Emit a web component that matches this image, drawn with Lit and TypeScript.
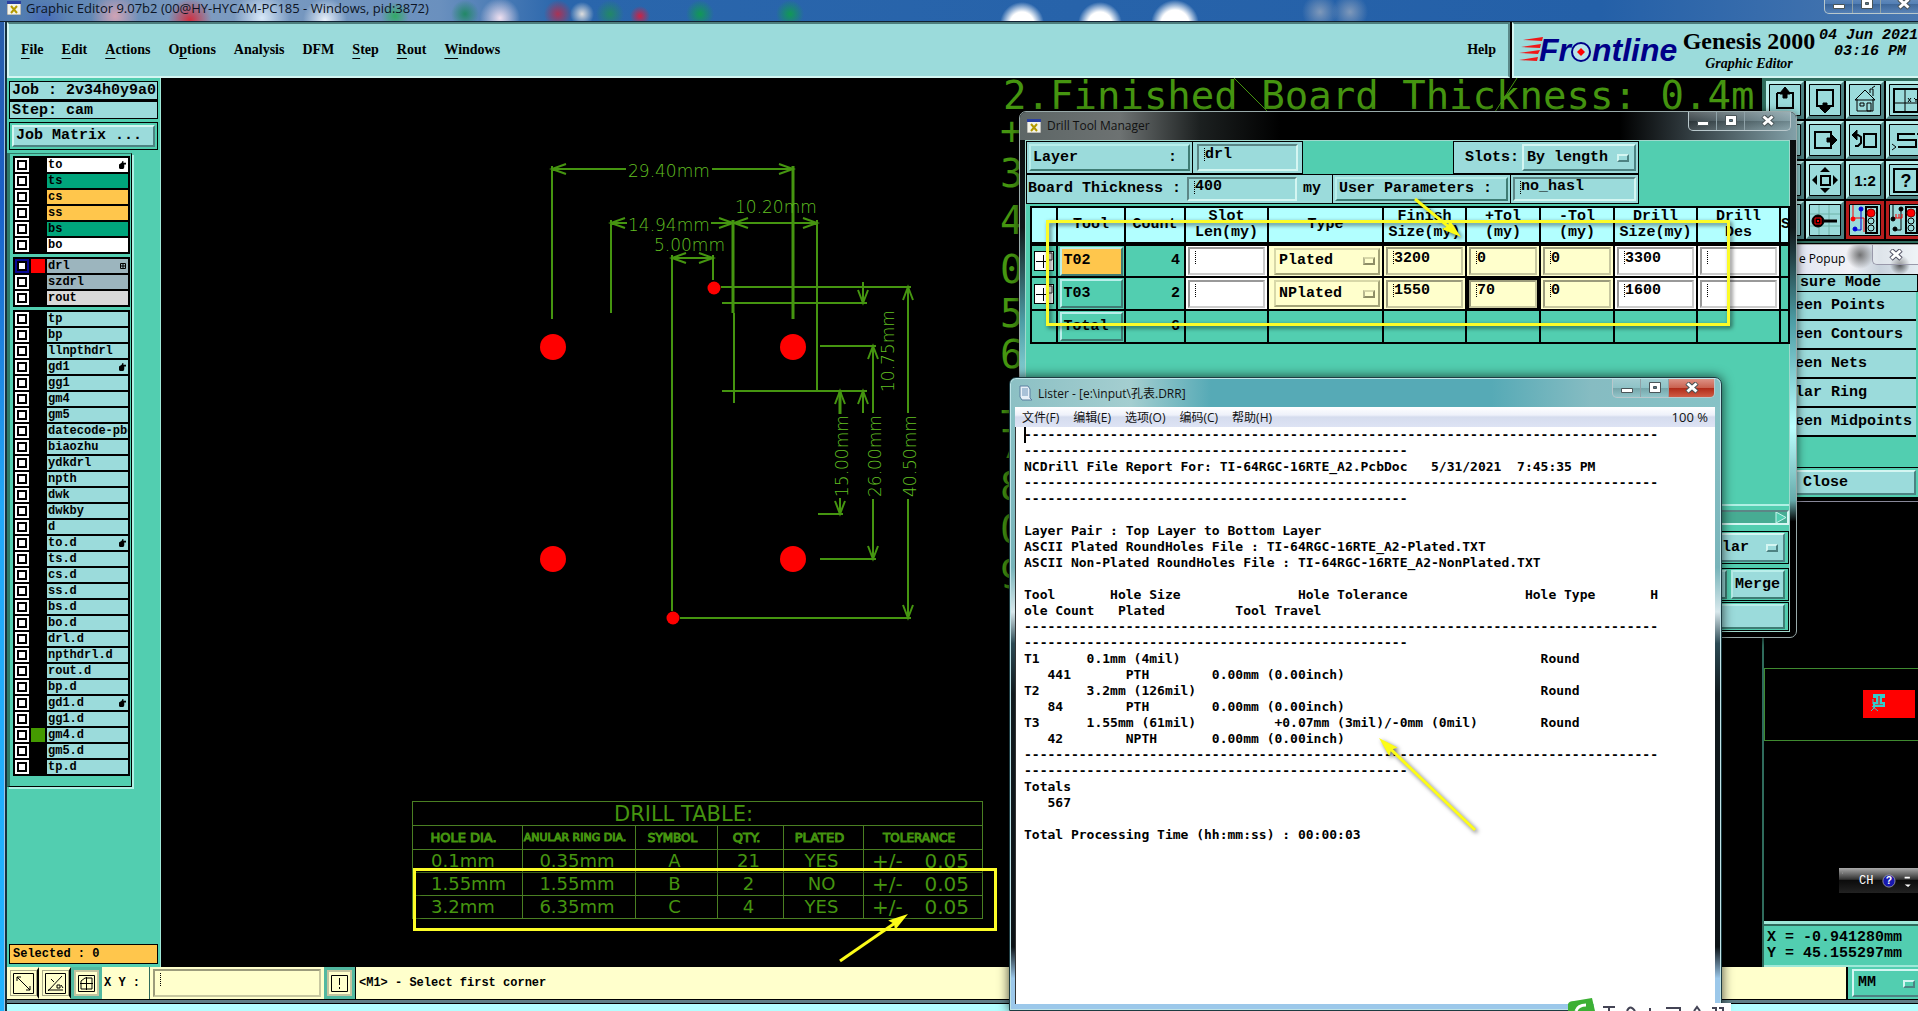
import { LitElement, html, css, svg, nothing } from "lit";
import { customElement, property } from "lit/decorators.js";
import { classMap } from "lit/directives/class-map.js";

type Layer = { name: string; tone?: string; swatch?: string; mark?: "hand" | "grid" };

const boardLayers: Layer[] = [
  { name: "to", tone: "white", mark: "hand" },
  { name: "ts", tone: "mask" },
  { name: "cs", tone: "signal" },
  { name: "ss", tone: "signal" },
  { name: "bs", tone: "mask" },
  { name: "bo", tone: "white" },
];
const drillLayers: Layer[] = [
  { name: "drl", tone: "drill", swatch: "red", mark: "grid" },
  { name: "szdrl", tone: "drill" },
  { name: "rout", tone: "rout" },
];
const hands = new Set(["gd1", "to.d", "gd1.d"]);
const docLayers: Layer[] =
  "tp bp llnpthdrl gd1 gg1 gm4 gm5 datecode-pbc biaozhu ydkdrl npth dwk dwkby d to.d ts.d cs.d ss.d bs.d bo.d drl.d npthdrl.d rout.d bp.d gd1.d gg1.d gm4.d gm5.d tp.d"
    .split(" ")
    .map((name) => ({
      name,
      mark: hands.has(name) ? "hand" : undefined,
      swatch: name === "gm4.d" ? "green" : undefined,
    }));

const bevel = css`
  * {
    box-sizing: border-box;
  }
  button,
  input,
  select {
    font: inherit;
    color: inherit;
    margin: 0;
    border-radius: 0;
    appearance: none;
    outline: none;
  }
  svg {
    display: block;
  }
  .raised {
    border: 2px solid;
    border-color: #d4f6f2 #4d8282 #4d8282 #d4f6f2;
    background: #9bdbdb;
  }
  .sunken {
    border: 2px solid;
    border-color: #5c8686 #d4f6f2 #d4f6f2 #5c8686;
    background: #9bdbdb;
  }
  .mono {
    font-family: "Liberation Mono", monospace;
    font-weight: 700;
    font-size: 15px;
    line-height: 16px;
  }
`;

@customElement("layer-list")
export class LayerList extends LitElement {
  @property({ attribute: false }) layers: Layer[] = [];

  static styles = [
    bevel,
    css`
      :host {
        display: block;
        background: #000;
        padding: 1px;
        font: 700 12px/14px "Liberation Mono", monospace;
        color: #000;
      }
      .row {
        display: grid;
        grid-template-columns: 14px 14px 1fr;
        column-gap: 2px;
        height: 16px;
        padding: 1px;
      }
      .tick {
        width: 14px;
        height: 14px;
        background: #fff;
        box-shadow: inset 0 0 0 2px #fff, inset 0 0 0 4px #000;
      }
      .tick:checked {
        box-shadow: inset 0 0 0 2px #0a0a96, inset 0 0 0 4px #000;
      }
      .swatch.red {
        background: #f00;
      }
      .swatch.green {
        background: #449a00;
      }
      .name {
        display: flex;
        align-items: center;
        justify-content: space-between;
        overflow: hidden;
        white-space: nowrap;
        padding: 0 2px 0 1px;
        background: #9bdbdb;
      }
      .name svg {
        flex: none;
      }
      .white {
        background: #fff;
      }
      .mask {
        background: #00a57c;
      }
      .signal {
        background: #ffc64c;
      }
      .drill {
        background: #9cb5be;
      }
      .rout {
        background: #d9d9d9;
      }
    `,
  ];

  private mark(kind?: string) {
    if (kind === "hand")
      return html`<svg width="7" height="8" viewBox="0 0 8 9"><path d="M0 4l3-2 1-2h1v2h3v2H6v3L5 9H1L0 8z" /></svg>`;
    if (kind === "grid")
      return html`<svg width="6" height="6" viewBox="0 0 6 6" fill="none" stroke="#000"><path d="M.5.5h5v5h-5zM3 0v6M0 3h6" /></svg>`;
    return nothing;
  }

  render() {
    return this.layers.map(
      (l) => html`<div class="row">
        <input class="tick" type="checkbox" id=${"l-" + l.name} ?checked=${l.swatch === "red"} />
        <span class="swatch ${l.swatch ?? ""}"></span>
        <label class="name ${l.tone ?? ""}" for=${"l-" + l.name}><span>${l.name}</span>${this.mark(l.mark)}</label>
      </div>`
    );
  }
}

@customElement("tool-palette")
export class ToolPalette extends LitElement {
  static styles = [
    bevel,
    css`
      :host {
        display: block;
        background: #000;
        border: 2px solid #2f6b5c;
        border-top-width: 3px;
        border-right: 0;
        overflow: hidden;
      }
      .grid {
        display: grid;
        grid-template-columns: repeat(4, 38px);
        grid-auto-rows: 38px;
        gap: 2px;
      }
      .tool {
        display: grid;
        place-items: center;
        padding: 0;
        border-width: 3px;
        border-color: #b9eeea #4d8282 #4d8282 #b9eeea;
      }
      .hot {
        border-color: #b81c1c;
      }
    `,
  ];

  private icons = [
    ["Pan up", svg`<path d="M8 9h4M20 9h4v15H8V9" fill="none" stroke-width="2"/><path d="M11 9l5-6 5 6v1h-3v4h-4v-4h-3z"/>`],
    ["Pan down", svg`<path d="M8 6h16v16H8z" fill="none" stroke-width="2"/><path d="M14 19h4v4h3v1l-5 5-5-5v-1h3z"/>`],
    ["Home", svg`<path d="M6 16l10-10 10 10M8 15v12h16V15M21 9V5h3v7M23 4l3-2" fill="none" stroke-width="1"/><path d="M11 19h4v3h-4zM18 19h4v8h-4zM6 16h20" fill="none"/>`],
    ["Zoom window", svg`<path d="M5 5h24v23H5z" fill="none" stroke-width="2"/><path d="M16 5v23M5 19h24" fill="none"/><path d="M19 14l3 4M22 14l-3 4M25 14l2 2 2-2M27 16v2" fill="none"/>`],
    ["Pan left", svg`<path d="M9 8h16v16H9z" fill="none" stroke-width="2"/>`],
    ["Pan right", svg`<path d="M6 8h16v16H6z" fill="none" stroke-width="2"/><path d="M18 14h4v-3h1l5 5-5 5h-1v-3h-4z"/>`],
    ["Previous view", svg`<path d="M15 10h12v13H15z" fill="none" stroke-width="2"/><path d="M5 11h4l3 2v6l-3 3H6" fill="none" stroke-width="2"/><path d="M3 11l5-5v10z"/>`],
    ["Snake", svg`<path d="M26 10H9v6h18v7H9" fill="none" stroke-width="2"/><path d="M28 10l3-3M28 10l3 3M7 23l-4-3M7 23l-4 3" fill="none"/>`],
    ["Zoom in", svg`<path d="M9 8h16v16H9z" fill="none" stroke-width="2"/>`],
    ["Pan all", svg`<path d="M12 12h9v9h-9z" fill="none" stroke-width="2"/><path d="M11 8l5-5 5 5zM11 24l5 5 5-5zM8 11l-5 5 5 5zM24 11l5 5-5 5z" stroke="none"/>`],
    ["Scale one to two", svg`<text x="16" y="22" text-anchor="middle" font-family="Liberation Sans, sans-serif" font-weight="700" font-size="15" stroke="none">1:2</text>`],
    ["Help", svg`<path d="M5 5h23v23H5z" fill="none" stroke-width="2"/><text x="17" y="23" text-anchor="middle" font-family="Liberation Sans, sans-serif" font-weight="700" font-size="18" stroke="none">?</text>`],
    ["Grid", svg`<path d="M9 8h16v16H9z" fill="none" stroke-width="2"/>`],
    ["Snap", svg`<path d="M10 1v30M20 1v30M1 10h30M1 22h30" fill="none" stroke="#6fb3a8"/><circle cx="9" cy="17" r="6"/><path d="M6 14h6v6H6z" fill="none" stroke="#f00"/><path d="M8 16h2v2H8z" fill="#f00" stroke="none"/><path d="M15 17h13" stroke-width="3"/>`],
    ["Net highlight", svg`<path d="M4 1v13h11v14" fill="none" stroke="#f00"/><path d="M12 5v21H6" fill="none" stroke="#0000d8"/><circle cx="12" cy="5" r="2" fill="#0000d8" stroke="#0000d8"/><circle cx="6" cy="25" r="2" fill="#0000d8" stroke="#0000d8"/><circle cx="4" cy="15" r="2" fill="#f00" stroke="#f00"/><path d="M17 3h11v26H17z" fill="none" stroke-width="2"/><circle cx="22" cy="9" r="4" fill="#f00" stroke="#800"/><circle cx="22" cy="17" r="3" fill="none"/><circle cx="22" cy="24" r="3" fill="none"/>`],
    ["Net break", svg`<path d="M4 1v13M12 5v21H6" fill="none"/><path d="M4 14h9M7 10v4M10 10v4M13 10v4" fill="none" stroke="#f00"/><circle cx="12" cy="5" r="2"/><circle cx="6" cy="25" r="2"/><circle cx="4" cy="15" r="2"/><path d="M17 3h11v26H17z" fill="none" stroke-width="2"/><circle cx="22" cy="9" r="4" fill="#f00" stroke="#800"/><circle cx="22" cy="17" r="3" fill="none"/><circle cx="22" cy="24" r="3" fill="none"/>`],
  ] as const;

  render() {
    return html`<div class="grid">
      ${this.icons.map(
        ([label, art], i) => html`<button class=${classMap({ tool: true, raised: true, hot: i > 13 })} aria-label=${label}>
          <svg width="32" height="32" viewBox="0 0 32 32" stroke="#000" fill="#000">
            <path d="M.5.5h31v31H.5z" fill="none" />
            ${art}
          </svg>
        </button>`
      )}
    </div>`;
  }
}

const arrow = (x: number, y: number, d: "l" | "r" | "u" | "d") => {
  const p = {
    l: `M${x + 14} ${y - 5}L${x} ${y}l14 5`,
    r: `M${x - 14} ${y - 5}L${x} ${y}l-14 5`,
    u: `M${x - 5} ${y + 13}L${x} ${y}l5 13`,
    d: `M${x - 5} ${y - 13}L${x} ${y}l5-13`,
  };
  return p[d];
};

@customElement("cad-canvas")
export class CadCanvas extends LitElement {
  static styles = [
    bevel,
    css`
      :host {
        display: block;
        position: relative;
        overflow: hidden;
        background: #000;
        color: #459510;
        font-family: "DejaVu Sans", sans-serif;
      }
      .plot {
        position: absolute;
        inset: 0;
        width: 100%;
        height: 100%;
      }
      .dim {
        font-size: 17px;
        font-weight: 200;
        fill: #62c022;
      }
      .note {
        font: 39px "DejaVu Sans Mono", monospace;
        fill: currentColor;
        white-space: pre;
      }
      .drills {
        position: absolute;
        left: 251px;
        top: 723px;
        width: 571px;
        table-layout: fixed;
        border-collapse: collapse;
        font-size: 18px;
        line-height: 20px;
        font-weight: 400;
      }
      .drills th,
      .drills td {
        border: 1px solid #4a7f22;
        height: 23px;
        padding: 0 4px 0 0;
        text-align: center;
        font-weight: 400;
        white-space: nowrap;
      }
      .drills caption {
        border: 1px solid #4a7f22;
        border-bottom: 0;
        height: 24px;
        padding-right: 28px;
        line-height: 24px;
        font-size: 21px;
      }
      .drills th {
        height: 24px;
        padding-right: 8px;
        font-size: 12px;
        -webkit-text-stroke: 1px #459510;
      }
      .drills th.big {
        font-size: 13px;
      }
      .drills th.long {
        font-size: 11px;
      }
      .drills td.dia {
        text-align: left;
        padding-left: 18px;
      }
      .pm {
        display: flex;
        justify-content: space-between;
        padding: 0 9px 0 8px;
        font-size: 20px;
      }
    `,
  ];

  private holes = [
    ["0.1mm", "0.35mm", "A", "21", "YES"],
    ["1.55mm", "1.55mm", "B", "2", "NO"],
    ["3.2mm", "6.35mm", "C", "4", "YES"],
  ];

  private notes: [string, number][] = [
    ["+", 144], ["3", 187], ["4", 234], ["0", 283], ["5", 327], ["6", 368], ["+", 424], ["7", 458], ["8", 500], ["0", 543], ["9", 588],
  ];

  render() {
    const lines = [
      "M552 166V319M552 169H626M712 169H793",
      "M611 220V313M611 223H627M711 223H817M817 220V391M734 313V403",
      "M672 255V611M672 258H713M713 255V280",
      "M721 287H911M722 303H867M863 282V303M722 391H867M863 391V413",
      "M840 498V514M818 514H843",
      "M820 346H876M873 346V413M873 499V559M820 559H876",
      "M908 287V413M908 499V618M680 618H911",
      arrow(552, 169, "l"), arrow(793, 169, "r"), arrow(611, 223, "l"), arrow(733, 223, "r"),
      arrow(734, 223, "l"), arrow(817, 223, "r"), arrow(672, 258, "l"), arrow(713, 258, "r"),
      arrow(863, 303, "d"), arrow(863, 391, "u"), arrow(840, 391, "u"), arrow(840, 514, "d"),
      arrow(873, 346, "u"), arrow(873, 559, "d"), arrow(908, 287, "u"), arrow(908, 618, "d"),
    ].join("");
    const up = (x: number, y: number, t: string) => svg`<text class="dim" transform="translate(${x} ${y}) rotate(-90)">${t}</text>`;
    return html`
      <svg class="plot">
        <g transform="translate(-161 -78)">
          <path d=${lines} fill="none" stroke="currentColor" stroke-width="2" />
          <path d="M793 166V319M733 220V313M840 391V414" fill="none" stroke="currentColor" stroke-width="3" />
          <text class="dim" x="628" y="177">29.40mm</text>
          <text class="dim" x="735" y="213">10.20mm</text>
          <text class="dim" x="628" y="231">14.94mm</text>
          <text class="dim" x="654" y="251">5.00mm</text>
          ${up(848, 497, "15.00mm")} ${up(881, 497, "26.00mm")} ${up(916, 497, "40.50mm")} ${up(894, 392, "10.75mm")}
          <g fill="#f00">
            <circle cx="553" cy="347" r="13" /><circle cx="793" cy="347" r="13" />
            <circle cx="553" cy="559" r="13" /><circle cx="793" cy="559" r="13" />
            <circle cx="714" cy="288" r="6.5" /><circle cx="673" cy="618" r="6.5" />
          </g>
          <text class="note" x="1003" y="109">2.Finished Board Thickness: 0.4m</text>
          ${this.notes.map(([t, y]) => svg`<text class="note" x="1000" y=${y}>${t}</text>`)}
          <path d="M1234 78L1294 138M1517 78L1478 138" stroke="currentColor" fill="none" />
        </g>
      </svg>
      <table class="drills">
        <caption>DRILL TABLE:</caption>
        <colgroup>
          <col style="width:110px" /><col style="width:113px" /><col style="width:82px" /><col style="width:66px" /><col style="width:80px" /><col />
        </colgroup>
        <tr>
          <th class="big">HOLE DIA.</th><th class="long">ANULAR RING DIA.</th><th>SYMBOL</th><th class="big">QTY.</th><th class="big">PLATED</th><th>TOLERANCE</th>
        </tr>
        ${this.holes.map(
          (r) => html`<tr>
            <td class="dia">${r[0]}</td>
            ${r.slice(1).map((c) => html`<td>${c}</td>`)}
            <td><div class="pm"><span>+/-</span><span>0.05</span></div></td>
          </tr>`
        )}
      </table>`;
  }
}

@customElement("window-buttons")
export class WindowButtons extends LitElement {
  @property() tone = "dark";
  static styles = [
    bevel,
    css`
      :host {
        display: block;
      }
      .set {
        display: flex;
        height: 19px;
        border: 1px solid #b9c8cc;
        border-top: 0;
        border-radius: 0 0 5px 5px;
        overflow: hidden;
      }
      .btn {
        display: grid;
        place-items: center;
        width: 28px;
        padding: 0;
        border: 0;
        border-right: 1px solid #8fa2a8;
        background: linear-gradient(#ffffff38, #ffffff10 50%, #00000022 50%, #ffffff18);
      }
      .btn:last-child {
        width: 45px;
        border-right: 0;
      }
      .red .btn:last-child {
        background: linear-gradient(#dd9285, #c9604e 50%, #b02a17 50%, #cf5c45);
      }
    `,
  ];
  render() {
    return html`<div class="set ${this.tone}">
      <button class="btn" aria-label="Minimize"><svg width="14" height="12"><path d="M1.5 6.500h11v4h-11z" fill="#fff" stroke="#4a5558" /></svg></button>
      <button class="btn" aria-label="Maximize"><svg width="14" height="12"><path d="M1.500.500h11v10h-11z" fill="#fff" stroke="#4a5558" /><path d="M5.500 4.500h3v2h-3z" fill="#578" stroke="#4a5558" /></svg></button>
      <button class="btn" aria-label="Close"><svg width="14" height="12"><path d="M2 1l10 9M12 1L2 10" stroke="#4a5558" stroke-width="5" /><path d="M2.500 1.500l9 8M11.500 1.500l-9 8" stroke="#fff" stroke-width="3" /></svg></button>
    </div>`;
  }
}

const xIcon = html`<svg width="14" height="14" viewBox="0 0 14 14"><path d="M0 0h14v14H0z" fill="#f4f4e8" stroke="#888" /><path d="M0 0h14v3H0z" fill="#2a3fa0" /><path d="M4 5l6 7M10 5l-6 7" stroke="#b49a00" stroke-width="2" /></svg>`;

@customElement("drill-manager")
export class DrillManager extends LitElement {
  static styles = [
    bevel,
    css`
      :host {
        display: flex;
        flex-direction: column;
        border: 1px solid #9aa;
        border-radius: 7px;
        padding: 0 6px 5px 5px;
        background: linear-gradient(#0a0c0c 0, #10181a 22%, #4d9ea6 40%, #bff 60%, #6aa 74%, #000 78%);
        box-shadow: 0 2px 10px #000a;
        color: #000;
        overflow: hidden;
      }
      .title {
        display: flex;
        justify-content: space-between;
        height: 28px;
        margin: 0 -6px 0 -5px;
        padding: 0 5px 0 7px;
        background: linear-gradient(90deg, #5d6666, #6d7272 100px, #1c2020 180px, #000 260px, #000 600px, #2b3438 660px, #82a0a8);
        font: 12px/26px "Open Sans", sans-serif;
        color: #111;
      }
      .name {
        display: flex;
        align-items: center;
        gap: 6px;
      }
      .body {
        flex: 1;
        display: flex;
        flex-direction: column;
        background: #52ceb0;
        border: 1px solid #9fd8cc;
      }
      .line {
        display: flex;
        height: 33px;
        flex: none;
      }
      .line.low {
        height: 30px;
      }
      .cell {
        display: flex;
        align-items: center;
        gap: 6px;
        padding: 2px 4px;
        border: 1px solid #000;
        background: #9bdbdb;
      }
      .cell + .cell {
        border-left: 0;
      }
      .push {
        display: flex;
        justify-content: space-between;
        align-items: center;
        width: 100%;
        height: 100%;
        padding: 0 2px;
        text-align: left;
        border-color: #b9eeea #3f7c74 #3f7c74 #b9eeea;
      }
      .field {
        width: 100%;
        height: 100%;
        min-width: 0;
        padding: 0 0 6px 6px;
        background-image: repeating-linear-gradient(#000 0 1px, transparent 1px 2px);
        background-size: 1px 14px;
        background-position: 5px 2px;
        background-repeat: no-repeat;
      }
      .w1 {
        width: 167px;
        padding: 2px;
      }
      .w2 {
        width: 110px;
      }
      .w3 {
        width: 186px;
        padding: 2px;
        gap: 3px;
      }
      .w4 {
        width: 307px;
        padding: 2px 1px;
      }
      .w5 {
        width: 178px;
        padding: 2px;
      }
      .w6 {
        width: 128px;
        padding: 2px;
      }
      .thick {
        width: 110px;
        height: 24px;
        flex: none;
      }
      .grow {
        flex: 1;
      }
      .w0 {
        width: 150px;
      }
      .pick {
        position: relative;
        flex: 1;
        height: 100%;
        display: flex;
      }
      .pick select {
        width: 100%;
        padding: 0 3px;
      }
      .pick::after {
        content: "";
        box-sizing: border-box;
        position: absolute;
        right: 7px;
        top: calc(50% - 4px);
        width: 12px;
        height: 8px;
        border: 2px solid;
        border-color: #d4f6f2 #4d8282 #4d8282 #d4f6f2;
      }
      .cream {
        background-color: #ffc;
      }
      .cream select {
        border-color: #d8d8a8 #a4a478 #a4a478 #d8d8a8;
        background-color: #ffc;
      }
      .cream .pick::after {
        border-color: #d8d8a8 #8e8e66 #8e8e66 #b8b890;
      }
      .sheet {
        width: 760px;
        margin: 2px 0 0 4px;
        table-layout: fixed;
        border-collapse: collapse;
      }
      .sheet th,
      .sheet td {
        border: 2px solid #000;
        padding: 0;
        height: 33px;
        overflow: hidden;
      }
      .sheet th {
        height: 37px;
        border-bottom-width: 4px;
        background: #b2ffff;
        white-space: pre-line;
        line-height: 16px;
      }
      .sheet .push {
        height: 29px;
        width: 63px;
        margin: auto;
        background: #52ceb0;
      }
      .sheet .first {
        background: #ffc64c;
      }
      .sheet .field {
        display: block;
        width: calc(100% - 4px);
        height: 28px;
        margin: 1px 2px;
        border-color: #999 #ccc #ccc #999;
        background-color: #fff;
      }
      .sheet .cream .field {
        background-color: #ffc;
        border-color: #9c9c7c #c8c8a0 #c8c8a0 #9c9c7c;
      }
      .sheet .pick {
        height: 29px;
        padding: 1px 2px 1px 5px;
      }
      .sheet .white {
        background: #fff;
      }
      .num {
        text-align: right;
      }
      .sheet .num {
        padding-right: 4px;
      }
      .sheet .active {
        box-shadow: inset 0 0 0 2px #000;
      }
      .plus {
        display: block;
        width: 20px;
        height: 20px;
        margin: 0 auto;
        padding: 0;
        border: 1px solid #000;
        background: #fff;
      }
      .tail {
        display: flex;
        flex-direction: column;
        align-items: flex-end;
        gap: 1px;
      }
      .scroll {
        width: 100%;
        height: 15px;
        margin-bottom: 5px;
        display: flex;
        justify-content: flex-end;
        background: #47ac93;
        border-width: 2px;
      }
      .rule {
        width: 100%;
        border-bottom: 2px solid #b0f0e4;
        margin-bottom: 3px;
      }
      .box {
        display: flex;
        gap: 4px;
        width: 300px;
        height: 33px;
        padding: 1px 3px;
        background: #52ceb0;
        border: 1px solid #000;
        justify-content: flex-end;
      }
      .box.shape {
        margin-bottom: 3px;
      }
      .box .pick select {
        text-align: left;
        padding-left: 227px;
      }
      .box .push {
        width: 54px;
      }
      .box .push.wide {
        flex: 1;
      }
      .box.last {
        height: 29px;
      }
    `,
  ];

  private heads = ["", "Tool", "Count", "Slot\nLen(my)", "Type", "Finish\nSize(my)", "+Tol\n(my)", "-Tol\n(my)", "Drill\nSize(my)", "Drill\nDes", "S"];
  private widths = [26, 68, 60, 83, 115, 83, 74, 74, 83, 83];
  private tools = [
    { id: "T02", count: 4, type: "Plated", finish: "3200", plus: "0", minus: "0", drill: "3300" },
    { id: "T03", count: 2, type: "NPlated", finish: "1550", plus: "70", minus: "0", drill: "1600" },
  ];

  private entry(label: string, value: string, tone: string, active = false) {
    return html`<td class=${classMap({ [tone]: true, active })}><input class="field sunken" aria-label=${label} .value=${value} /></td>`;
  }

  render() {
    return html`
      <div class="title"><span class="name">${xIcon}Drill Tool Manager</span><window-buttons></window-buttons></div>
      <div class="body mono">
        <div class="line">
          <div class="cell w1"><button class="push raised"><span>Layer</span><span>:&nbsp;</span></button></div>
          <div class="cell w2"><input class="field sunken" aria-label="Layer" value="drl" /></div>
          <span class="grow"></span>
          <div class="cell w3">
            <label for="slots">&nbsp;Slots:</label>
            <span class="pick"><select id="slots" class="raised"><option>By length</option></select></span>
          </div>
          <span class="w0"></span>
        </div>
        <div class="line low">
          <div class="cell w4">
            <label for="thick">Board Thickness :</label>
            <input id="thick" class="field sunken thick" value="400" />my
          </div>
          <div class="cell w5"><button class="push raised">User Parameters :</button></div>
          <div class="cell w6"><input class="field sunken" aria-label="User parameters" value="no_hasl" /></div>
        </div>
        <table class="sheet">
          <colgroup>${this.widths.map((w) => html`<col style="width:${w}px" />`)}<col /></colgroup>
          <tr>${this.heads.map((h) => html`<th>${h}</th>`)}</tr>
          ${this.tools.map(
            (t, i) => html`<tr>
              <td><button class="plus" aria-label="Expand ${t.id}"><svg width="18" height="18"><path d="M1 9.500h13M8.500 3v13" stroke="#000" fill="none" /><path d="M13 1h4v7h-4" fill="none" stroke="#333" /></svg></button></td>
              <td><button class="push raised ${i ? "" : "first"}">${t.id}</button></td>
              <td class="num">${t.count}</td>
              ${this.entry("Slot length", "", "white")}
              <td class="cream"><span class="pick"><select class="raised" aria-label="Type"><option>${t.type}</option></select></span></td>
              ${this.entry("Finish size", t.finish, "cream")} ${this.entry("Plus tolerance", t.plus, "cream", i === 1)}
              ${this.entry("Minus tolerance", t.minus, "cream")} ${this.entry("Drill size", t.drill, "white")}
              ${this.entry("Drill designator", "", "white")}
              <td></td>
            </tr>`
          )}
          <tr>
            <td></td><td><button class="push raised">Total</button></td><td class="num">6</td>
            ${[1, 2, 3, 4, 5, 6, 7, 8].map(() => html`<td></td>`)}
          </tr>
        </table>
        <span class="grow"></span>
        <div class="tail">
          <div class="rule"></div>
          <div class="scroll sunken"><svg width="12" height="11"><path d="M1 0v11l10-5.500z" fill="#52ceb0" stroke="#c8f4ec" /></svg></div>
          <div class="box shape"><span class="pick"><select class="raised" aria-label="Shape"><option>lar</option></select></span></div>
          <div class="box"><button class="push raised wide" aria-label="Apply"></button><button class="push raised">Merge</button></div>
          <div class="box last"><button class="push raised wide" aria-label="Close"></button></div>
        </div>
      </div>`;
  }
}

const at = (...parts: [number, string][]) => parts.reduce((line, [col, text]) => line.padEnd(col) + text, "");
const dashes = ["-".repeat(81), "-".repeat(49)];
const report = [
  ...dashes,
  at([0, "NCDrill File Report For: TI-64RGC-16RTE_A2.PcbDoc"], [52, "5/31/2021"], [63, "7:45:35 PM"]),
  ...dashes,
  "",
  "Layer Pair : Top Layer to Bottom Layer",
  "ASCII Plated RoundHoles File : TI-64RGC-16RTE_A2-Plated.TXT",
  "ASCII Non-Plated RoundHoles File : TI-64RGC-16RTE_A2-NonPlated.TXT",
  "",
  at([0, "Tool"], [11, "Hole Size"], [35, "Hole Tolerance"], [64, "Hole Type"], [80, "H"]),
  at([0, "ole Count"], [12, "Plated"], [27, "Tool Travel"]),
  ...dashes,
  at([0, "T1"], [8, "0.1mm (4mil)"], [66, "Round"]),
  at([3, "441"], [13, "PTH"], [24, "0.00mm (0.00inch)"]),
  at([0, "T2"], [8, "3.2mm (126mil)"], [66, "Round"]),
  at([3, "84"], [13, "PTH"], [24, "0.00mm (0.00inch)"]),
  at([0, "T3"], [8, "1.55mm (61mil)"], [32, "+0.07mm (3mil)/-0mm (0mil)"], [66, "Round"]),
  at([3, "42"], [13, "NPTH"], [24, "0.00mm (0.00inch)"]),
  ...dashes,
  "Totals",
  at([3, "567"]),
  "",
  "Total Processing Time (hh:mm:ss) : 00:00:03",
].join("\n");

@customElement("file-lister")
export class FileLister extends LitElement {
  static styles = [
    bevel,
    css`
      :host {
        display: flex;
        flex-direction: column;
        padding: 0 6px 6px 5px;
        border: 1px solid #1d3c42;
        border-radius: 7px 7px 0 0;
        background: linear-gradient(#8cc4c8 0, #78b4ba 30%, #d8e8ec 37%, #2c4a54 42%, #111a1e 50%, #0c1216 90%, #9cc8ea 95%);
        box-shadow: 0 0 12px #000b, inset 0 0 0 1px #bfe4e8;
        color: #111;
        font: 12px/19px "Open Sans", "Noto Sans CJK SC", sans-serif;
        overflow: hidden;
      }
      .title {
        display: flex;
        justify-content: space-between;
        height: 28px;
        margin: 1px -5px 0 -4px;
        padding: 0 5px 0 6px;
        border-radius: 6px 6px 0 0;
        background: linear-gradient(90deg, #8cc0c4, #a4ced0 120px, #56aab6 200px, #56aab6 480px, #86bcc2 580px, #86c2c6);
      }
      .name {
        display: flex;
        align-items: center;
        gap: 5px;
      }
      .menu {
        display: flex;
        align-items: center;
        gap: 14px;
        height: 20px;
        padding: 0 7px;
        background: linear-gradient(#fff, #eef1fa 40%, #d5dcee 50%, #dde3f4);
      }
      .menu button {
        padding: 0;
        border: 0;
        background: none;
      }
      .zoom {
        margin-left: auto;
        font-size: 13px;
      }
      .page {
        flex: 1;
        margin: 0;
        padding: 0 10px 0 9px;
        background: #fff;
        color: #000;
        font: 700 13px/16px "DejaVu Sans Mono", "Liberation Mono", monospace;
        box-shadow: inset 1px 0 #333;
      }
      .caret {
        float: left;
        width: 2px;
        height: 16px;
        margin-right: -2px;
        background: #000;
      }
    `,
  ];

  render() {
    return html`
      <div class="title">
        <span class="name"><svg width="16" height="16" viewBox="0 0 16 16"><path d="M3 1h8l2 3v9l2 2H5l-2-3z" fill="#e8f0f8" stroke="#5a7fa0" /><path d="M5 4h6M5 6h6M5 8h6M5 10h6" stroke="#6c93b8" /></svg>Lister - [e:\\input\\孔表.DRR]</span>
        <window-buttons tone="red"></window-buttons>
      </div>
      <div class="menu">
        ${["文件(F)", "编辑(E)", "选项(O)", "编码(C)", "帮助(H)"].map((m) => html`<button>${m}</button>`)}
        <span class="zoom">100 %</span>
      </div>
      <pre class="page"><span class="caret"></span>${report}</pre>`;
  }
}

@customElement("measure-popup")
export class MeasurePopup extends LitElement {
  static styles = [
    bevel,
    css`
      :host {
        display: flex;
        flex-direction: column;
        border-bottom: 1px solid #889;
        background: #52ceb0;
        color: #000;
      }
      .title {
        display: flex;
        justify-content: space-between;
        height: 30px;
        padding-left: 9px;
        border-top: 1px solid #aaa;
        background: radial-gradient(circle at 70px 10px, #555c 0, #5550 14px), radial-gradient(circle at 110px 20px, #333c 0, #3330 10px), linear-gradient(90deg, #dfe4f2, #f2f2f6 60px, #c8d2dc 70%, #e4ecf2);
        font: 12px/28px "Open Sans", sans-serif;
      }
      .x {
        width: 46px;
        height: 20px;
        padding: 0;
        display: grid;
        place-items: center;
        border: 1px solid #99a;
        border-width: 0 0 1px 1px;
        border-radius: 0 0 0 5px;
        background: #fff6;
      }
      .head {
        height: 18px;
        padding-left: 9px;
        border: 1px solid #000;
        background: #9bdbdb;
      }
      .mode {
        height: 29px;
        margin-right: 2px;
        padding: 0 0 0 5px;
        text-align: left;
        border: 0;
        border-bottom: 2px solid #000;
        background: #9bdbdb;
      }
      .foot {
        display: flex;
        margin-top: 30px;
        padding: 2px;
        border: 1px solid #000;
        border-width: 1px 0 4px;
      }
      .close {
        width: 100%;
        height: 25px;
        text-align: left;
        padding: 0 0 0 9px;
      }
    `,
  ];
  render() {
    return html`
      <div class="title"><span>e Popup</span><button class="x" aria-label="Close popup"><svg width="14" height="12"><path d="M2 1l10 9M12 1L2 10" stroke="#556" stroke-width="5" /><path d="M2.500 1.500l9 8M11.500 1.500l-9 8" stroke="#fff" stroke-width="3" /></svg></button></div>
      <div class="head mono">sure Mode</div>
      ${["een Points", "een Contours", "een Nets", "lar Ring", "een Midpoints"].map((m) => html`<button class="mode mono">${m}</button>`)}
      <div class="foot"><button class="close raised mono">Close</button></div>`;
  }
}

@customElement("app-root")
export class AppRoot extends LitElement {
  static styles = [
    bevel,
    css`
      :host {
        display: flex;
        flex-direction: column;
        position: relative;
        min-height: 100vh;
        padding-left: 7px;
        overflow: hidden;
        color: #000;
        background: linear-gradient(90deg, transparent 4px, #9cc4e8 4px 5px, #16303c 5px), linear-gradient(#2a5ca4, #1a60c8 20%, #22a8f8 50%, #22b4ff);
      }
      .caption {
        display: flex;
        align-items: center;
        justify-content: space-between;
        height: 22px;
        flex: none;
        margin-left: -7px;
        padding: 0 0 6px 7px;
        font: 13px/14px "Open Sans", sans-serif;
        color: #0c1424;
        border-bottom: 1px solid #123;
        background:
          radial-gradient(circle at 45px 20px, #4466bbcc 0, transparent 22px),
          radial-gradient(circle at 115px 16px, #e8a8b4d0 0, transparent 24px),
          radial-gradient(circle at 190px 20px, #d03040 0, transparent 22px),
          radial-gradient(circle at 262px 18px, #d8e8f8 0, transparent 28px),
          radial-gradient(circle at 325px 20px, #e8f0fa 0, transparent 22px),
          radial-gradient(circle at 395px 16px, #3a6 0, transparent 14px),
          radial-gradient(circle at 465px 14px, #286 0, transparent 14px),
          radial-gradient(circle at 500px 18px, #f0e0f0 0, transparent 20px),
          radial-gradient(circle at 558px 14px, #a35 0, transparent 14px),
          radial-gradient(circle at 582px 14px, #ddd 0, transparent 12px),
          radial-gradient(circle at 610px 14px, #286 0, transparent 14px),
          radial-gradient(circle at 640px 16px, #c24 0, transparent 10px),
          radial-gradient(circle at 700px 14px, #195 0, transparent 14px),
          radial-gradient(circle at 790px 14px, #195 0, transparent 14px),
          radial-gradient(circle at 1022px 24px, #fff 0, #fff 12px, transparent 22px),
          radial-gradient(circle at 1100px 24px, #fff 0, #fff 12px, transparent 22px),
          radial-gradient(circle at 1175px 24px, #fff 0, #fff 14px, transparent 24px),
          radial-gradient(circle at 1320px 12px, #7e98ba 0, transparent 18px),
          radial-gradient(circle at 1350px 12px, #7e98ba 0, transparent 18px),
          linear-gradient(90deg, #4d79ae, #7e9cc0 200px, #6a90be 440px, #2a66ac 560px, #2460a8 1600px, #4a78b0);
      }
      .caption .name {
        display: flex;
        align-items: center;
        gap: 5px;
      }
      .caption window-buttons {
        margin: -7px -9px 0 0;
      }
      .top {
        display: flex;
        height: 56px;
        flex: none;
        background: #000;
      }
      .panel {
        border: 2px solid;
        border-color: #4d7d7d #5b8a8a #d4f6f2 #d4f6f2;
        background: #9bdbdb;
      }
      .menus {
        flex: 1;
        display: flex;
        align-items: center;
        gap: 18px;
        padding: 0 12px;
        margin-right: 2px;
        font: 700 14px/18px "Liberation Serif", serif;
      }
      .menus button {
        padding: 0;
        border: 0;
        background: none;
      }
      .menus u {
        text-underline-offset: 4px;
        text-decoration-thickness: 1px;
      }
      .menus .help {
        margin-left: auto;
      }
      .brand {
        width: 406px;
        display: flex;
        align-items: center;
        overflow: hidden;
        padding-left: 5px;
        gap: 3px;
        border-right: 0;
      }
      .brand svg,
      .product,
      .clock {
        flex: none;
      }
      .product {
        width: 134px;
        text-align: center;
        font: 700 24px/28px "Liberation Serif", serif;
        white-space: nowrap;
      }
      .product small {
        display: block;
        font: italic 700 14px/18px "Liberation Serif", serif;
      }
      .clock {
        align-self: flex-start;
        padding-top: 4px;
        font-style: italic;
        text-align: right;
      }
      .clock div + div {
        padding-right: 12px;
      }
      .work {
        flex: 1;
        display: flex;
        min-height: 0;
        background: #000;
      }
      cad-canvas {
        flex: 1;
      }
      .side {
        width: 154px;
        display: flex;
        flex-direction: column;
        padding: 3px 2px 3px;
        border-right: 1px solid #9fe8d8;
        background: #52ceb0;
      }
      .info {
        height: 19px;
        padding: 1px 2px;
        border: 1px solid #000;
        background: #9bdbdb;
        white-space: nowrap;
      }
      .info + .info {
        border-top-width: 2px;
      }
      .matrix {
        margin: 3px 0;
        padding: 2px;
        border: 1px solid #000;
      }
      .matrix button {
        display: block;
        width: 100%;
        height: 22px;
        text-align: left;
        padding: 0 2px;
      }
      .layers {
        width: 125px;
        margin-left: -2px;
        padding: 2px 1px 10px 3px;
        display: grid;
        gap: 3px;
        border: 1px solid #000;
        border-left: 3px solid #2f7a68;
        border-top-color: #2f7a68;
        box-shadow: 2px 2px #b0f0e4;
      }
      .selected {
        height: 20px;
        margin-top: auto;
        padding: 1px 3px;
        font-size: 12px;
        border: 1px solid #000;
        background: #ffc64c;
      }
      .aside {
        width: 156px;
        flex: none;
        display: flex;
        flex-direction: column;
        border-left: 2px solid #2f6b5c;
        background: #000;
      }
      tool-palette {
        height: 165px;
        flex: none;
      }
      .overview {
        display: block;
        flex: 1;
        width: 100%;
        min-height: 0;
      }
      .coords {
        padding: 6px 3px 4px;
        border-top: 3px solid #9fe8d8;
        border-bottom: 2px solid #9fe8d8;
        background: #52ceb0;
        white-space: nowrap;
        height: 46px;
        box-shadow: inset 0 2px #2f6b5c;
      }
      .status {
        display: flex;
        align-items: stretch;
        height: 33px;
        flex: none;
        background: #ffc;
        font: 700 12px/16px "Liberation Mono", monospace;
        border-bottom: 1px solid #000;
      }
      .ico {
        display: grid;
        place-items: center;
        width: 32px;
        padding: 0;
        border: 3px solid #ffc;
        border-right-color: #000;
        border-right-width: 2px;
        background: #ffc;
        box-shadow: inset 0 0 0 1px #aa8;
      }
      .ico.on {
        width: 31px;
        border: 3px solid #52b8a0;
        box-shadow: inset 0 0 0 2px #c4c4a0;
      }
      .status label {
        width: 48px;
        padding: 8px 2px;
        white-space: nowrap;
        border-right: 1px solid #2f6b5c;
      }
      .xy {
        width: 168px;
        height: 28px;
        margin: 2px 3px;
        border-color: #9c9c7c #c8c8a0 #c8c8a0 #9c9c7c;
        background: repeating-linear-gradient(#000 0 1px, transparent 1px 2px) 5px 2px / 1px 14px no-repeat #ffc;
      }
      .hint {
        flex: 1;
        padding: 8px 3px;
        border-left: 1px solid #000;
      }
      .unit {
        position: relative;
        width: 72px;
        padding: 2px 0 2px 4px;
        border-left: 2px solid #000;
        background: #52ceb0;
        overflow: hidden;
        font-size: 15px;
      }
      .unit select {
        width: 72px;
        height: 28px;
        padding: 0 4px;
        background: #52ceb0;
      }
      .unit::after {
        content: "";
        box-sizing: border-box;
        position: absolute;
        right: 3px;
        top: 13px;
        width: 12px;
        height: 8px;
        border: 2px solid;
        border-color: #d4f6f2 #4d8282 #4d8282 #d4f6f2;
      }
      .base {
        height: 11px;
        flex: none;
        background: #b2ffff;
        border-top: 3px solid #5f7f86;
        box-shadow: inset 0 1px #000;
      }
      measure-popup {
        position: absolute;
        right: 0;
        top: 244px;
        width: 128px;
      }
      drill-manager {
        position: absolute;
        left: 1019px;
        top: 111px;
        width: 778px;
        height: 527px;
      }
      file-lister {
        position: absolute;
        left: 1009px;
        top: 377px;
        width: 713px;
        bottom: 0;
      }
      .lang {
        position: absolute;
        right: 0;
        top: 868px;
        width: 79px;
        height: 25px;
        display: flex;
        align-items: center;
        gap: 9px;
        padding: 0 6px 0 20px;
        color: #fff;
        font: 12px/16px "Liberation Mono", monospace;
        background: radial-gradient(circle, #888 1px, transparent 1px) 2px 3px / 3px 4px no-repeat, linear-gradient(#aaa, #333 45%, #0c0c0c 50%, #222);
      }
      .ime {
        position: absolute;
        left: 1567px;
        bottom: 0;
      }
      .notes {
        position: absolute;
        inset: 0;
        width: 100%;
        height: 100%;
        pointer-events: none;
        filter: drop-shadow(2px 2px 2px #0009);
      }
    `,
  ];

  private menu: [string, number][] = [
    ["File", 0], ["Edit", 0], ["Actions", 0], ["Options", 1], ["Analysis", -1], ["DFM", -1], ["Step", 0], ["Rout", 0], ["Windows", 0],
  ];

  private pointer(x1: number, y1: number, x2: number, y2: number) {
    const len = Math.hypot(x2 - x1, y2 - y1);
    const turn = (Math.atan2(y2 - y1, x2 - x1) * 180) / Math.PI;
    return svg`<g transform="translate(${x1} ${y1}) rotate(${turn})">
      <path d="M0 -1.500H${len - 14}V1.500H0z"/><path d="M${len} 0l-20 6 3 -6 -3 -6z"/></g>`;
  }

  render() {
    return html`
      <header class="caption"><span class="name">${xIcon}Graphic Editor 9.07b2 (00@HY-HYCAM-PC185 - Windows, pid:3872)</span><window-buttons></window-buttons></header>
      <div class="top">
        <nav class="menus panel">
          ${this.menu.map(([m, k]) => html`<button>${k < 0 ? m : html`${m.slice(0, k)}<u>${m[k]}</u>${m.slice(k + 1)}`}</button>`)}
          <button class="help">Help</button>
        </nav>
        <div class="brand panel">
          <svg width="160" height="34" viewBox="0 0 160 34">
            <g fill="#f01818"><path d="M4 7l20-3-1 4zM2 14l20-3-1 4zM0 20l21-3-2 4zM0 27l19-3-1 4z" /></g>
            <g fill="#000088" font-family="Liberation Sans, Arial, sans-serif" font-style="italic" font-weight="700" font-size="32"><text x="20" y="28">Fr</text><text x="73" y="28">ntline</text></g>
            <circle cx="62" cy="19" r="9" fill="#b8e4e8" stroke="#000088" stroke-width="2" /><path d="M62 15l4 4-4 4-4-4z" fill="#f00" />
          </svg>
          <div class="product">Genesis 2000<small>Graphic Editor</small></div>
          <div class="clock mono"><div>04 Jun 2021</div><div>03:16 PM</div></div>
        </div>
      </div>
      <div class="work">
        <aside class="side mono">
          <div class="info">Job : 2v34h0y9a0</div>
          <div class="info">Step: cam</div>
          <div class="matrix"><button class="raised">Job Matrix ...</button></div>
          <div class="layers">
            <layer-list .layers=${boardLayers}></layer-list>
            <layer-list .layers=${drillLayers}></layer-list>
            <layer-list .layers=${docLayers}></layer-list>
          </div>
          <div class="selected">Selected : 0</div>
        </aside>
        <cad-canvas></cad-canvas>
        <div class="aside">
          <tool-palette></tool-palette>
          <svg class="overview">
            <path d="M0 425.500H160M0 497.500H160M.5 425V498" stroke="#3f8a30" fill="none" />
            <path d="M99 447h52v28H99z" fill="#f00" />
            <path d="M110 452h10v2h-3v6h3v3h-10v-3h3v-6h-3z" stroke="#3cc" stroke-width="2" fill="#a55" /><path d="M112 463l-5 5M108 463l6 5M109 456v5" stroke="#3cc" fill="none" />
          </svg>
          <div class="coords mono">X = -0.941280mm<br />Y = 45.155297mm</div>
        </div>
      </div>
      <footer class="status">
        <button class="ico" aria-label="Diagonal"><svg width="21" height="21" viewBox="0 0 21 21" fill="none" stroke="#000"><path d="M.5.5h20v20H.5zM4 4l13 13M4 8V4h4M17 13v4h-4" /></svg></button>
        <button class="ico" aria-label="Angle"><svg width="21" height="21" viewBox="0 0 21 21" fill="none" stroke="#000"><path d="M.5.5h20v20H.5zM3 18L17 3M3 17h15M6 6l3 3M12 12h3v3h-3zM16 12l2 3" /></svg></button>
        <button class="ico on" aria-label="Grid snap"><svg width="17" height="17" viewBox="0 0 17 17" fill="none" stroke="#000"><path d="M.5.5h16v16H.5zM8.500 2v13M2 8.500h13M3 14V6l4-3h7v11z" /></svg></button>
        <label for="xy">X Y :</label>
        <input id="xy" class="xy sunken" />
        <button class="ico on" aria-label="Alert"><svg width="17" height="17" viewBox="0 0 17 17" fill="none" stroke="#000"><path d="M.5.5h16v16H.5zM8.500 3v7M8.500 12v2" /></svg></button>
        <div class="hint">&lt;M1&gt; - Select first corner</div>
        <div class="unit"><select class="raised" aria-label="Units"><option>MM</option></select></div>
      </footer>
      <div class="base"></div>

      <measure-popup></measure-popup>
      <drill-manager></drill-manager>
      <file-lister></file-lister>
      <div class="lang"><span>CH</span><svg width="34" height="16" viewBox="0 0 34 16"><circle cx="8" cy="8" r="7" fill="#1818b0" stroke="#99a" /><text x="8" y="12" text-anchor="middle" fill="#fff" font-family="Liberation Sans, sans-serif" font-weight="700" font-size="12">?</text><path d="M26 3h6v2h-6zM26 12h7l-3 3z" fill="#fff" /></svg></div>
      <svg class="ime" width="164" height="13"><path d="M27 5h137v8H27z" fill="#fff" /><path d="M1 13V6q1-3 6-3l18-3 3 13z" fill="#3cb034" /><path d="M9 13q2-6 10-6" stroke="#fff" stroke-width="3" fill="none" /><path d="M36 9h12M42 9v4M60 13q3-7 8 0M83 13v-3M99 10h14v3M127 13l3-4 3 4M145 10h4v3M152 10h4v3" stroke="#445" stroke-width="2" fill="none" /></svg>
      <svg class="notes">
        <g fill="none" stroke="#fcfc28" stroke-width="3"><path d="M1047.500 221.500H1728.500V324.500H1047.500z" /><path d="M414.500 869.500H995.500V929.500H414.500z" /></g>
        <g fill="#fcfc18">${this.pointer(1415, 199, 1461, 237)} ${this.pointer(1475, 830, 1379, 738)} ${this.pointer(840, 961, 908, 914)}</g>
      </svg>`;
  }
}
